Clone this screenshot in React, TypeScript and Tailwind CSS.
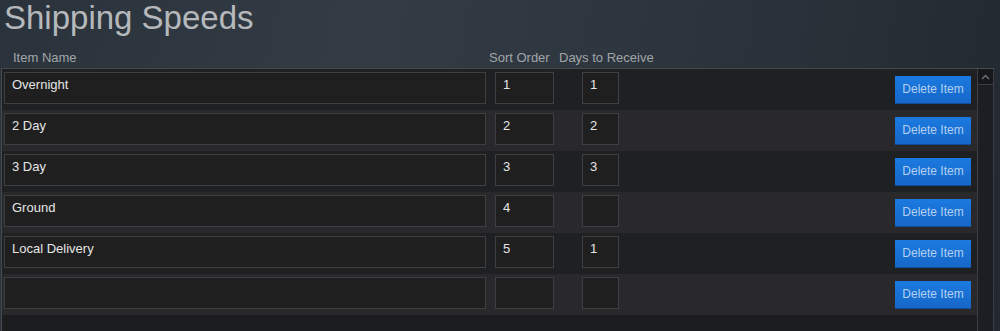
import React from "react";

type Row = { name: string; sort: string; days: string };

const rows: Row[] = [
  { name: "Overnight", sort: "1", days: "1" },
  { name: "2 Day", sort: "2", days: "2" },
  { name: "3 Day", sort: "3", days: "3" },
  { name: "Ground", sort: "4", days: "" },
  { name: "Local Delivery", sort: "5", days: "1" },
  { name: "", sort: "", days: "" },
];

function Field({ value, className }: { value: string; className: string }) {
  return (
    <div
      className={`h-[32px] mt-[3px] border border-[#3e3f41] bg-[#1f1f20] text-[13px] leading-[15px] text-[#e6e6e6] pt-[4px] pl-[7px] ${className}`}
    >
      {value}
    </div>
  );
}

export default function App() {
  return (
    <div
      className="w-[1000px] h-[331px] overflow-hidden flex flex-col bg-[linear-gradient(100deg,#2a333c_0%,#333c45_35%,#2d363f_60%,#222930_100%)]"
      style={{ fontFamily: '"Liberation Sans", Arial, sans-serif' }}
    >
      <div className="h-[36px] pl-[4px] text-[33px] leading-[36px] text-[#b6b9bb] whitespace-nowrap">
        Shipping Speeds
      </div>
      <div className="mt-[14px] h-[18px] pt-[1px] flex text-[13px] leading-[14px] text-[#a2a5a8]">
        <div className="w-[489px] pl-[13px]">Item Name</div>
        <div className="w-[70px]">Sort Order</div>
        <div>Days to Receive</div>
      </div>
      <div className="flex-1 flex ml-[1px] mr-[6px] border-t border-l border-[#47494c] bg-[#1c1d1f]">
        <div className="w-[976px] flex flex-col">
          {rows.map((r, i) => (
            <div
              key={i}
              className={`h-[41px] flex items-start pl-[2px] ${
                i % 2 === 0 ? "bg-[#1f2022]" : "bg-[#29292b]"
              }`}
            >
              <Field value={r.name} className="w-[482px]" />
              <Field value={r.sort} className="w-[59px] ml-[9px]" />
              <Field value={r.days} className="w-[37px] ml-[28px]" />
              <button className="ml-auto mr-[6px] mt-[7px] w-[76px] h-[28px] bg-[linear-gradient(#1b7ae0,#1667c8)] border-b border-[#0f4f99] text-[12px] leading-[27px] text-[#b4cff0]">
                Delete Item
              </button>
            </div>
          ))}
        </div>
        <div className="w-[17px] flex flex-col border-l border-r border-[#3a3d41] bg-[#1b1e22]">
          <div className="h-[16px] bg-[#16181b] border-b border-[#3a3d41] flex items-center justify-center">
            <svg width="9" height="6" viewBox="0 0 9 6">
              <path d="M1 5 L4.5 1.5 L8 5" fill="none" stroke="#6a6d70" strokeWidth="1.5" />
            </svg>
          </div>
        </div>
      </div>
    </div>
  );
}
